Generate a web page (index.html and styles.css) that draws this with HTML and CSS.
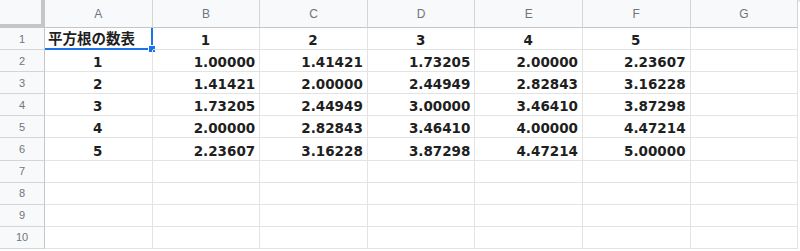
FILE: index.html
```html
<!DOCTYPE html>
<html lang="ja">
<head>
  <meta charset="UTF-8">
  <title>平方根の数表</title>
  <link rel="stylesheet" href="styles.css">
</head>
<body>

<div class="sheet">
  <!-- 列見出し -->
  <div class="corner"></div>
  <div class="col-head">A</div>
  <div class="col-head">B</div>
  <div class="col-head">C</div>
  <div class="col-head">D</div>
  <div class="col-head">E</div>
  <div class="col-head">F</div>
  <div class="col-head">G</div>

  <div class="row-head">1</div>
  <div class="cell left selected">平方根の数表<span class="handle"></span></div>
  <div class="cell center">1</div>
  <div class="cell center">2</div>
  <div class="cell center">3</div>
  <div class="cell center">4</div>
  <div class="cell center">5</div>
  <div class="cell"></div>

  <div class="row-head">2</div>
  <div class="cell center">1</div>
  <div class="cell">1.00000</div>
  <div class="cell">1.41421</div>
  <div class="cell">1.73205</div>
  <div class="cell">2.00000</div>
  <div class="cell">2.23607</div>
  <div class="cell"></div>

  <div class="row-head">3</div>
  <div class="cell center">2</div>
  <div class="cell">1.41421</div>
  <div class="cell">2.00000</div>
  <div class="cell">2.44949</div>
  <div class="cell">2.82843</div>
  <div class="cell">3.16228</div>
  <div class="cell"></div>

  <div class="row-head">4</div>
  <div class="cell center">3</div>
  <div class="cell">1.73205</div>
  <div class="cell">2.44949</div>
  <div class="cell">3.00000</div>
  <div class="cell">3.46410</div>
  <div class="cell">3.87298</div>
  <div class="cell"></div>

  <div class="row-head">5</div>
  <div class="cell center">4</div>
  <div class="cell">2.00000</div>
  <div class="cell">2.82843</div>
  <div class="cell">3.46410</div>
  <div class="cell">4.00000</div>
  <div class="cell">4.47214</div>
  <div class="cell"></div>

  <div class="row-head">6</div>
  <div class="cell center">5</div>
  <div class="cell">2.23607</div>
  <div class="cell">3.16228</div>
  <div class="cell">3.87298</div>
  <div class="cell">4.47214</div>
  <div class="cell">5.00000</div>
  <div class="cell"></div>

  <div class="row-head">7</div>
  <div class="cell"></div><div class="cell"></div><div class="cell"></div><div class="cell"></div>
  <div class="cell"></div><div class="cell"></div><div class="cell"></div>

  <div class="row-head">8</div>
  <div class="cell"></div><div class="cell"></div><div class="cell"></div><div class="cell"></div>
  <div class="cell"></div><div class="cell"></div><div class="cell"></div>

  <div class="row-head">9</div>
  <div class="cell"></div><div class="cell"></div><div class="cell"></div><div class="cell"></div>
  <div class="cell"></div><div class="cell"></div><div class="cell"></div>

  <div class="row-head">10</div>
  <div class="cell"></div><div class="cell"></div><div class="cell"></div><div class="cell"></div>
  <div class="cell"></div><div class="cell"></div><div class="cell"></div>
</div>

</body>
</html>
```

FILE: styles.css
```css
body {
  margin: 0;
  padding: 0;
  background: #fff;
  overflow: hidden;
}

.sheet {
  display: grid;
  grid-template-columns: 45px repeat(7, 107.6px);
  grid-template-rows: 26px repeat(10, 22.1px);
  border-top: 2px solid #e6e6e6;
  box-sizing: border-box;
  font-family: "DejaVu Sans", "Noto Sans CJK JP", sans-serif;
}

/* 見出し */
.corner {
  background: #f8f9fa;
  border-right: 4px solid #c4c7c5;
  border-bottom: 4px solid #c4c7c5;
  margin-top: -2px;
}

.col-head, .row-head {
  background: #f8f9fa;
  color: #70757a;
  font-family: "Liberation Sans", Arial, sans-serif;
  display: flex;
  align-items: center;
  justify-content: center;
}

.col-head {
  font-size: 12px;
  border-right: 1px solid #d3d5d7;
  border-bottom: 1px solid #c4c7c5;
  margin-top: -2px;
}

.row-head {
  font-size: 11px;
  border-right: 1px solid #c4c7c5;
  border-bottom: 1px solid #d3d5d7;
}

/* セル */
.cell {
  position: relative;
  border-right: 1px solid #e2e3e3;
  border-bottom: 1px solid #e2e3e3;
  font-size: 13.5px;
  font-weight: bold;
  color: #1f1f1f;
  line-height: 16px;
  display: flex;
  align-items: flex-end;
  justify-content: flex-end;
  padding: 0 4px 1px 3px;
  white-space: nowrap;
}

.cell.center {
  justify-content: center;
}

.cell.left {
  justify-content: flex-start;
  font-size: 14.5px;
}

.cell.selected {
  border-right: 2px solid #1a73e8;
  border-bottom: 2px solid #1a73e8;
}

.handle {
  position: absolute;
  right: -5px;
  bottom: -5px;
  width: 6px;
  height: 6px;
  background: #1a73e8;
  border: 1px solid #fff;
}
```
